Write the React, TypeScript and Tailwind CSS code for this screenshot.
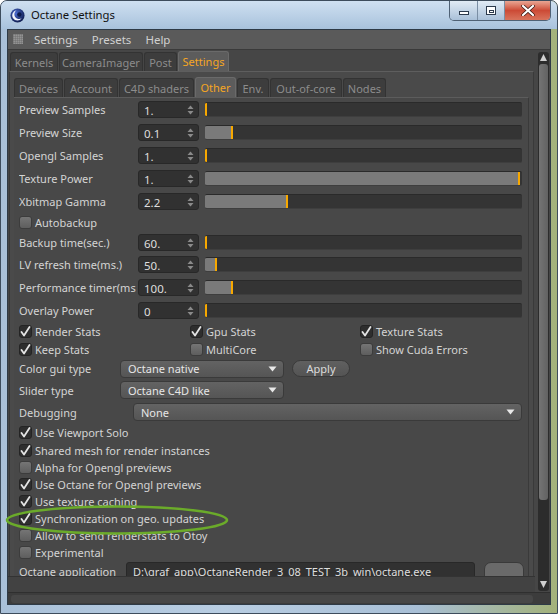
import React from "react";

const Tab = ({ label, w, active }: { label: string; w: string; active?: boolean }) => (
  <div
    className={`${w} shrink-0 flex items-center justify-center mr-[1px] rounded-t-[3px] border-t border-x ${
      active
        ? "h-[20px] bg-[#5c5c5c] border-[#6a6a6a] text-[#f5a623]"
        : "h-[19px] mt-[1px] bg-[#3d3d3d] border-[#333333] text-[#8c8c8c]"
    } text-[11px] leading-none`}
  >
    {label}
  </div>
);

const Spinner = () => (
  <svg width="7" height="10" viewBox="0 0 7 10">
    <path d="M3.5 0.5 L6.5 4 L0.5 4 Z" fill="#8a8a8a" />
    <path d="M3.5 9.5 L6.5 6 L0.5 6 Z" fill="#8a8a8a" />
  </svg>
);

const NumField = ({ value }: { value: string }) => (
  <div className="w-[61px] h-[17px] shrink-0 bg-[#313131] rounded-[3px] border border-[#282828] flex items-center justify-between pl-[5px] pr-[4px] text-[11.5px] text-[#dedede] leading-none">
    <span className="mt-[2px]">{value}</span>
    <Spinner />
  </div>
);

const Slider = ({ fill }: { fill: number }) => (
  <div className="ml-[6px] w-[317px] h-[15px] shrink-0 bg-[#343434] border-t border-[#2a2a2a] border-b border-b-[#3e3e3e] rounded-[2px] flex overflow-hidden">
    <div className="h-full bg-[#7a7a7a]" style={{ width: fill }} />
    <div className="h-full w-[2px] bg-[#f7a800]" />
  </div>
);

const SliderRow = ({ label, value, fill, h = "h-[23px]" }: { label: string; value: string; fill: number; h?: string }) => (
  <div className={`flex items-center shrink-0 ${h}`}>
    <div className="w-[117px] mr-[2px] shrink-0 overflow-hidden whitespace-nowrap text-[11px] text-[#d4d4d4] leading-[15px]">{label}</div>
    <NumField value={value} />
    <Slider fill={fill} />
  </div>
);

const Check = ({ checked }: { checked?: boolean }) =>
  checked ? (
    <div className="w-[13px] h-[13px] shrink-0 rounded-[3px] bg-[#2e2e2e] border border-[#242424] flex items-center justify-center">
      <svg width="11" height="11" viewBox="0 0 11 11">
        <path d="M1.5 6 L4 9.5 L9.5 1" stroke="#e4e4e4" strokeWidth="1.8" fill="none" strokeLinecap="round" strokeLinejoin="round" />
      </svg>
    </div>
  ) : (
    <div className="w-[13px] h-[13px] shrink-0 rounded-[3px] bg-gradient-to-b from-[#757575] to-[#5e5e5e] border border-[#3c3c3c]" />
  );

const CheckItem = ({ label, checked, w }: { label: string; checked?: boolean; w?: string }) => (
  <div className={`flex items-center ${w ?? ""}`}>
    <Check checked={checked} />
    <span className="ml-[3px] text-[11px] text-[#d4d4d4] leading-[15px] whitespace-nowrap">{label}</span>
  </div>
);

const Arrow = () => (
  <svg width="9" height="6" viewBox="0 0 9 6">
    <path d="M0.5 0.5 L8.5 0.5 L4.5 5.5 Z" fill="#e8e8e8" />
  </svg>
);

const Dropdown = ({ label, w }: { label: string; w: string }) => (
  <div className={`${w} h-[18px] shrink-0 rounded-[4px] bg-gradient-to-b from-[#636363] to-[#555555] border border-[#3a3a3a] flex items-center justify-between pl-[7px] pr-[6px] text-[11px] text-[#e6e6e6] leading-none`}>
    <span>{label}</span>
    <Arrow />
  </div>
);

export default function App() {
  return (
    <div className="w-[558px] h-[614px] relative overflow-hidden font-['Noto_Sans','Open_Sans',sans-serif] bg-[linear-gradient(90deg,#a9c0d8_0%,#b8cde2_40%,#a8bfd6_75%,#a3b27a_100%)] rounded-t-[7px] border border-[#3d4c5c] flex flex-col">
      {/* title bar */}
      <div className="h-[28px] shrink-0 relative flex items-center pl-[9px] bg-gradient-to-b from-[#cfe0f1] to-[#a8c2dc]">
        <svg width="15" height="15" viewBox="0 0 16 16" className="mt-[1px]">
          <defs>
            <radialGradient id="g" cx="0.4" cy="0.35" r="0.7">
              <stop offset="0" stopColor="#4b6bd0" />
              <stop offset="1" stopColor="#0d1a4a" />
            </radialGradient>
          </defs>
          <circle cx="8" cy="8" r="7.5" fill="url(#g)" />
          <path d="M7 2.5 A5.5 5.5 0 1 0 12.5 11 A4.2 4.2 0 1 1 7 2.5 Z" fill="#f2f4fa" />
          <circle cx="10" cy="7" r="2.4" fill="#0d1a4a" />
        </svg>
        <span className="ml-[6px] text-[11.3px] text-[#111] leading-none">Octane Settings</span>
        <div className="absolute top-0 right-[6px] h-[20px] flex rounded-b-[5px] border border-t-0 border-[#4f6175] overflow-hidden">
          <div className="w-[28px] h-full bg-gradient-to-b from-[#e1ebf5] to-[#a9c0d8] border-r border-[#7a8ea4] flex items-center justify-center">
            <div className="w-[10px] h-[4px] bg-white border border-[#2c3a4c] mt-[5px]" />
          </div>
          <div className="w-[27px] h-full bg-gradient-to-b from-[#e1ebf5] to-[#a9c0d8] border-r border-[#7a8ea4] flex items-center justify-center">
            <div className="w-[10px] h-[9px] bg-white border border-[#2c3a4c] flex items-center justify-center">
              <div className="w-[5px] h-[3px] border border-[#2c3a4c] mt-[1px]" />
            </div>
          </div>
          <div className="w-[45px] h-full bg-gradient-to-b from-[#e8a593] via-[#cc4a36] to-[#d8735c] flex items-center justify-center">
            <svg width="14" height="11" viewBox="0 0 14 11">
              <path d="M2 1 L12 10 M12 1 L2 10" stroke="#3a1a14" strokeWidth="3.6" strokeLinecap="round" />
              <path d="M2 1 L12 10 M12 1 L2 10" stroke="#ffffff" strokeWidth="2.2" strokeLinecap="round" />
            </svg>
          </div>
        </div>
      </div>

      {/* client */}
      <div className="mx-[6px] h-[576px] shrink-0 bg-[#464646] border border-[#2e3a46] flex flex-col">
        {/* menu bar */}
        <div className="h-[20px] shrink-0 bg-[#5a5a5a] border-b border-[#3a3a3a] flex items-center pl-[5px] text-[11.5px] text-[#d0d0d0] leading-none">
          <svg width="11" height="11" viewBox="0 0 11 11">
            {Array.from({ length: 25 }).map((_, i) => (
              <rect key={i} x={(i % 5) * 2 + 0.5} y={Math.floor(i / 5) * 2 + 0.5} width="1.2" height="1.2" fill="#cfcfcf" />
            ))}
          </svg>
          <span className="ml-[10px]">Settings</span>
          <span className="ml-[14px]">Presets</span>
          <span className="ml-[14px]">Help</span>
        </div>

        {/* body */}
        <div className="flex h-[542px] shrink-0">
          <div className="flex-1 flex flex-col">
            <div className="flex pl-[2px] pt-[1px] h-[21px] shrink-0 items-end">
              <Tab label="Kernels" w="w-[48px]" />
              <Tab label="CameraImager" w="w-[84px]" />
              <Tab label="Post" w="w-[33px]" />
              <Tab label="Settings" w="w-[51px]" active />
            </div>
            {/* outer panel */}
            <div className="ml-[1px] w-[525px] h-[505px] shrink-0 bg-[#4a4a4a] border-t border-[#5e5e5e] border-x border-x-[#3a3a3a] flex flex-col overflow-hidden">
              <div className="flex pl-[4px] pt-[4px] h-[25px] shrink-0 items-end">
                <Tab label="Devices" w="w-[49px]" />
                <Tab label="Account" w="w-[54px]" />
                <Tab label="C4D shaders" w="w-[75px]" />
                <Tab label="Other" w="w-[41px]" active />
                <Tab label="Env." w="w-[32px]" />
                <Tab label="Out-of-core" w="w-[72px]" />
                <Tab label="Nodes" w="w-[43px]" />
              </div>
              {/* inner panel */}
              <div className="mx-[4px] flex-1 min-h-0 bg-[#484848] border-t border-[#5c5c5c] border-r border-r-[#3a3a3a] pl-[5px] flex flex-col overflow-hidden">
                <SliderRow label="Preview Samples" value="1." fill={0} />
                <SliderRow label="Preview Size" value="0.1" fill={26} />
                <SliderRow label="Opengl Samples" value="1." fill={0} />
                <SliderRow label="Texture Power" value="1." fill={313} />
                <SliderRow label="Xbitmap Gamma" value="2.2" fill={81} />
                <div className="h-[19px] shrink-0 flex items-center">
                  <CheckItem label="Autobackup" />
                </div>
                <SliderRow label="Backup time(sec.)" value="60." fill={0} h="h-[21px]" />
                <SliderRow label="LV refresh time(ms.)" value="50." fill={10} />
                <SliderRow label="Performance timer(ms.)" value="100." fill={26} />
                <SliderRow label="Overlay Power" value="0" fill={0} />
                <div className="h-[19px] shrink-0 flex items-center">
                  <CheckItem label="Render Stats" checked w="w-[171px]" />
                  <CheckItem label="Gpu Stats" checked w="w-[170px]" />
                  <CheckItem label="Texture Stats" checked />
                </div>
                <div className="h-[17px] shrink-0 flex items-center">
                  <CheckItem label="Keep Stats" checked w="w-[171px]" />
                  <CheckItem label="MultiCore" w="w-[170px]" />
                  <CheckItem label="Show Cuda Errors" />
                </div>
                <div className="h-[21px] shrink-0 flex items-center">
                  <div className="w-[101px] shrink-0 text-[11px] text-[#d4d4d4] leading-none">Color gui type</div>
                  <Dropdown label="Octane native" w="w-[164px]" />
                  <div className="ml-[8px] w-[58px] h-[17px] rounded-full bg-gradient-to-b from-[#606060] to-[#545454] border border-[#3a3a3a] flex items-center justify-center text-[11px] text-[#dcdcdc] leading-none">
                    Apply
                  </div>
                </div>
                <div className="h-[22px] shrink-0 flex items-center">
                  <div className="w-[101px] shrink-0 text-[11px] text-[#d4d4d4] leading-none">Slider type</div>
                  <Dropdown label="Octane C4D like" w="w-[164px]" />
                </div>
                <div className="h-[22px] shrink-0 flex items-center">
                  <div className="w-[114px] shrink-0 text-[11px] text-[#d4d4d4] leading-none">Debugging</div>
                  <Dropdown label="None" w="w-[389px]" />
                </div>
                <div className="h-[19px] shrink-0 flex items-center"><CheckItem label="Use Viewport Solo" checked /></div>
                <div className="h-[17px] shrink-0 flex items-center"><CheckItem label="Shared mesh for render instances" checked /></div>
                <div className="h-[17px] shrink-0 flex items-center"><CheckItem label="Alpha for Opengl previews" /></div>
                <div className="h-[17px] shrink-0 flex items-center"><CheckItem label="Use Octane for Opengl previews" checked /></div>
                <div className="h-[17px] shrink-0 flex items-center"><CheckItem label="Use texture caching" checked /></div>
                <div className="h-[17px] shrink-0 flex items-center"><CheckItem label="Synchronization on geo. updates" checked /></div>
                <div className="h-[17px] shrink-0 flex items-center"><CheckItem label="Allow to send renderstats to Otoy" /></div>
                <div className="h-[17px] shrink-0 flex items-center"><CheckItem label="Experimental" /></div>
                <div className="h-[20px] flex items-center shrink-0">
                  <div className="w-[107px] shrink-0 text-[11px] text-[#d4d4d4] leading-[15px]">Octane application</div>
                  <div className="w-[349px] h-[18px] shrink-0 bg-[#313131] rounded-[3px] border border-[#282828] pl-[6px] text-[11px] text-[#dedede] leading-[17px] whitespace-nowrap overflow-hidden">
                    D:\graf_app\OctaneRender_3_08_TEST_3b_win\octane.exe
                  </div>
                  <div className="ml-[9px] w-[40px] h-[18px] shrink-0 rounded-t-[7px] bg-[#6a6a6a] border border-[#3a3a3a]" />
                </div>
              </div>
            </div>
            <div className="h-[16px] shrink-0 bg-[#424242] border-t border-[#333333]" />
          </div>
          {/* scrollbar */}
          <div className="w-[11px] shrink-0 ml-[3px] mr-[1px] mt-[2px] mb-[1px] bg-[#2c2c2c] rounded-[3px] flex flex-col items-center">
            <svg width="9" height="10" viewBox="0 0 9 10" className="mt-[1px]">
              <path d="M4.5 1 L8 8 L1 8 Z" fill="#cfcfcf" />
            </svg>
            <div className="w-[9px] h-[436px] mt-[1px] rounded-[3px] bg-gradient-to-r from-[#747474] to-[#626262]" />
            <div className="flex-1" />
            <svg width="9" height="10" viewBox="0 0 9 10" className="mb-[2px]">
              <path d="M4.5 9 L8 2 L1 2 Z" fill="#cfcfcf" />
            </svg>
          </div>
        </div>
        {/* bottom bar */}
        <div className="flex-1 bg-[#3c3c3c] border-t border-[#2f2f2f] px-[3px] pt-[2px]">
          <div className="w-[522px] h-[8px] rounded-[3px] bg-[#474747]" />
        </div>
      </div>

      {/* highlight ellipse */}
      <svg className="absolute left-[4px] top-[504px] pointer-events-none" width="225" height="32" viewBox="0 0 225 32">
        <ellipse cx="112" cy="15" rx="110" ry="13.5" fill="none" stroke="#6bab2a" strokeWidth="2.6" />
      </svg>
    </div>
  );
}
